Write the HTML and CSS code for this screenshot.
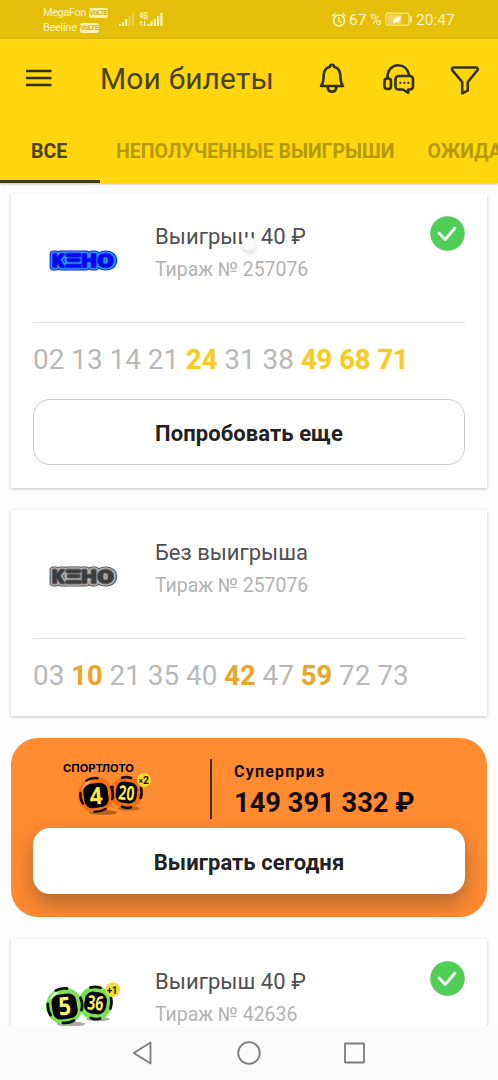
FILE: index.html
```
<!DOCTYPE html>
<html lang="ru">
<head>
<meta charset="utf-8">
<title>Мои билеты</title>
<link rel="stylesheet" href="styles.css">
</head>
<body>
<div class="screen">
  <div class="status">
    <div class="carriers">
      <div class="carrier"><span class="megafon">MegaFon</span><b class="volte">VoLTE</b></div>
      <div class="carrier"><span class="beeline">Beeline</span><b class="volte">VoLTE</b></div>
    </div>
    <svg class="signals" width="46" height="18" viewBox="118 11 46 18" fill="#fff5bd">
      <rect x="119" y="24" width="2" height="2"/><rect x="122" y="22" width="2" height="4"/><rect x="125" y="19" width="2.2" height="7"/>
      <rect x="128.500" y="16" width="2" height="10" opacity=".35"/><rect x="132" y="13" width="2" height="13" opacity=".35"/>
      <text class="net" x="139.500" y="18.500" textLength="8" lengthAdjust="spacingAndGlyphs">4G</text>
      <path d="M141 21v5M139.500 22.500L141 21l1.500 1.500M144.500 21v5M143 24.500l1.500 1.500 1.500-1.500" fill="none" stroke="#fff5bd"/>
      <rect x="147.500" y="24" width="2" height="2"/><rect x="150.500" y="21.500" width="2" height="4.500"/><rect x="153.700" y="19" width="2.200" height="7"/><rect x="157" y="16" width="2.200" height="10"/><rect x="160.300" y="13" width="2.200" height="13"/>
    </svg>
    <svg class="alarm" width="16" height="16" viewBox="0 0 16 16" fill="none" stroke="#fff5bd" stroke-width="1.500"><circle cx="8" cy="8.500" r="5.500"/><path d="M8 5v4l2.500 1.500M1.300 4.200l3-2.700M14.700 4.200l-3-2.700"/></svg>
    <span class="percent">67 %</span>
    <svg class="battery" width="28" height="15" viewBox="0 0 28 15"><rect x="1" y="1.200" width="23" height="12" rx="1.500" fill="none" stroke="#fbe88d" stroke-width="1.200"/><rect x="2.500" y="2.700" width="14" height="9" fill="#f0d362"/><rect x="25" y="4" width="1.800" height="6.500" fill="#fff1ac"/><path d="M8.500 11C8 7.500 11 5 15.500 4c.5 4-1.500 6.500-5 6.200l-1 1z" fill="#fffbe3"/></svg>
    <span class="clock">20:47</span>
  </div>

  <header class="header">
    <div class="appbar">
      <svg class="menu" width="26" height="18" viewBox="0 0 26 18" stroke="#353007" stroke-width="2.700"><path d="M0 2h25.500M0 9h25.500M0 16h25.500"/></svg>
      <h1 class="title">Мои билеты</h1>
      <svg class="bell" width="26" height="32" viewBox="319 62 26 32" fill="none" stroke="#353007" stroke-width="2.600" stroke-linejoin="round" stroke-linecap="round"><path d="M330 65.800a2 2 0 0 1 4 0c4.300 1.200 6.200 4.500 6.300 8.800.1 5 .3 7.500 2.700 10.400h-22c2.400-2.900 2.600-5.400 2.700-10.400.1-4.300 2-7.600 6.300-8.800z"/><path d="M327.600 86c.4 3.200 2.200 4.700 4.400 4.700s4-1.500 4.400-4.700"/></svg>
      <svg class="support" width="34" height="32" viewBox="382 62 34 32" fill="none" stroke="#353007" stroke-width="2.600" stroke-linejoin="round" stroke-linecap="round"><rect x="384.500" y="77.500" width="6.500" height="10.500" rx="2.700"/><path d="M387.500 76.800c-.2-7.700 4.500-12.600 10.500-12.600 5.700 0 10.200 4 11 9.500"/><path d="M398.500 75h11.500a3 3 0 0 1 3 3v7.500a3 3 0 0 1-3 3h-1.800v3.300l-5.200-3.300h-4.500a3 3 0 0 1-3-3V78a3 3 0 0 1 3-3z"/><path stroke-width="2.200" d="M400.300 81.800h.1M404.300 81.800h.1M408.300 81.800h.1"/></svg>
      <svg class="filter" width="30" height="32" viewBox="450 62 30 32" fill="none" stroke="#353007" stroke-width="2.500" stroke-linejoin="round"><path d="M453.500 66.500h22.500c1.600 0 2.300 1.700 1.300 2.900L467.800 81v8.500l-5.600 3V81l-9.800-11.600c-1-1.300-.3-2.900 1.100-2.900z"/></svg>
    </div>
    <nav class="tabs">
      <div class="tab tab-active">ВСЕ</div>
      <div class="tab tab-unclaimed">НЕПОЛУЧЕННЫЕ ВЫИГРЫШИ</div>
      <div class="tab tab-pending">ОЖИДА</div>
    </nav>
  </header>

  <main class="list">
    <section class="card card-win">
      <div class="summary">
        <svg class="logo" width="122" height="40" viewBox="33 240 122 40">
          <defs><g id="keno-word"><text x="52" y="266.500" textLength="12" lengthAdjust="spacingAndGlyphs">K</text><text x="65.500" y="266.500" textLength="16" lengthAdjust="spacingAndGlyphs">Ξ</text><text x="81.500" y="266.500" textLength="15" lengthAdjust="spacingAndGlyphs">H</text><text x="97.500" y="266.500" textLength="16" lengthAdjust="spacingAndGlyphs">O</text></g></defs>
          <g class="keno keno-blue"><use href="#keno-word" class="edge"/><use href="#keno-word" class="ring"/><use href="#keno-word" class="inner"/><use href="#keno-word" class="face"/></g>
        </svg>
        <div class="info"><div class="result win40">Выигрыш 40 ₽</div><div class="draw">Тираж № 257076</div></div>
        <svg class="check" width="35" height="35" viewBox="0 0 35 35"><circle cx="17.500" cy="17.500" r="17.300" fill="#50ce58"/><path d="M9 17l6.200 6.500L25 12" fill="none" stroke="#f1fff1" stroke-width="2.900" stroke-linecap="round" stroke-linejoin="round"/></svg>
      </div>
      <div class="numbers yellow">02 13 14 21 <b>24</b> 31 38 <b>49</b> <b>68</b> <b>71</b></div>
      <button class="retry">Попробовать еще</button>
      <span class="touch"></span>
    </section>

    <section class="card card-lose">
      <div class="summary">
        <svg class="logo" width="122" height="40" viewBox="33 240 122 40"><g class="keno keno-gray"><use href="#keno-word" class="edge"/><use href="#keno-word" class="ring"/><use href="#keno-word" class="inner"/><use href="#keno-word" class="face"/></g></svg>
        <div class="info"><div class="result">Без выигрыша</div><div class="draw">Тираж № 257076</div></div>
      </div>
      <div class="numbers amber">03 <b>10</b> 21 35 40 <b>42</b> 47 <b>59</b> 72 73</div>
    </section>

    <section class="promo">
      <div class="promo-top">
        <svg class="sportloto" width="100" height="60" viewBox="60 760 100 60">
          <text x="63" y="773" class="brand" textLength="71" lengthAdjust="spacingAndGlyphs">СПОРТЛОТО</text>
          <ellipse cx="103" cy="813.500" rx="14" ry="2.500" fill="#b8621f"/><ellipse cx="129" cy="809.500" rx="11" ry="2" fill="#b8621f"/>
          <circle cx="126.500" cy="793.500" r="16.300" fill="#f56f16"/><g fill="none" stroke="#170d05" stroke-width="2.600" stroke-linecap="round"><path d="M122 778.800q5-1.500 9 .2M141 789q1.500 5-.5 10M131 808.200q-5 1.500-9-.5M112.500 788q-1.500 5 .5 10"/></g>
          <rect x="116" y="783" width="21" height="21" rx="7" transform="rotate(8 126.500 793.500)"/>
          <circle cx="96" cy="796" r="18" fill="#f56f16"/><path d="M81.500 791q3-9 10-11-3 6-10 11" fill="#ffb06f"/><g fill="none" stroke="#170d05" stroke-width="2.600" stroke-linecap="round"><path d="M86.500 781.500q5-3.200 11-2.300M111 788q2.800 6 1.300 12M105.500 810q-5 3-11 2.700M80.500 794q-.5 6 2.500 10.500"/></g>
          <rect x="83.800" y="784.300" width="24.400" height="24.400" rx="8" transform="rotate(-8 96 796.500)"/>
          <text class="ball" x="89.500" y="805.500" font-size="24" transform="rotate(-5 96 797)" textLength="13" lengthAdjust="spacingAndGlyphs">4</text>
          <text class="ball" x="118.500" y="801" font-size="20" transform="rotate(6 126 794)" textLength="16" lengthAdjust="spacingAndGlyphs">20</text>
          <circle cx="144" cy="781" r="7" fill="#f5d936"/><text class="mult" x="138.500" y="785" textLength="10.500" lengthAdjust="spacingAndGlyphs"><tspan font-size="9">×</tspan>2</text>
        </svg>
        <div class="rule"></div>
        <div class="prize"><div class="prize-label">Суперприз</div><div class="prize-sum">149 391 332 ₽</div></div>
      </div>
      <button class="play">Выиграть сегодня</button>
    </section>

    <section class="card card-last">
      <div class="summary">
        <svg class="logo balls" width="122" height="60" viewBox="33 978 122 60">
          <ellipse cx="71" cy="1025" rx="14" ry="2.500" fill="#aaa"/><ellipse cx="98" cy="1020" rx="12" ry="2.200" fill="#aaa"/>
          <circle cx="95.500" cy="1004" r="17" fill="#7ede58"/><g fill="none" stroke="#0b1606" stroke-width="2.800" stroke-linecap="round"><path d="M90.500 988.500q5-1.500 10 .3M111 999q1.200 5-.6 10.500M100 1019.500q-5 1.500-9-.5M80 999q-1 6 1 11"/></g>
          <rect x="84.500" y="993" width="22" height="22" rx="8" transform="rotate(8 95.500 1004)"/>
          <circle cx="64.500" cy="1007" r="18.500" fill="#7ede58"/><path d="M49 1001q4-9 11-10-4 6-11 10" fill="#dfffc9"/><g fill="none" stroke="#0b1606" stroke-width="2.800" stroke-linecap="round"><path d="M56 991.500q5-2.500 11-2M80.500 999q2.800 6 1 12M74 1021.500q-5 3-11 2.300M47.800 1005q-.4 6 2.700 11"/></g>
          <rect x="52" y="995" width="25" height="25" rx="8" transform="rotate(-8 64.500 1007)"/>
          <text class="ball ball-cream" x="58.500" y="1016" font-size="25" transform="rotate(-5 65 1007)" textLength="12.500" lengthAdjust="spacingAndGlyphs">5</text>
          <text class="ball ball-cream" x="87.500" y="1011" font-size="20" transform="rotate(6 95 1004)" textLength="16" lengthAdjust="spacingAndGlyphs">36</text>
          <circle cx="113" cy="990.500" r="7.300" fill="#f1dc3e"/><text class="mult" x="107" y="994.500" textLength="10.500" lengthAdjust="spacingAndGlyphs">+1</text>
        </svg>
        <div class="info"><div class="result win40">Выигрыш 40 ₽</div><div class="draw draw-short">Тираж № 42636</div></div>
        <svg class="check" width="35" height="35" viewBox="0 0 35 35"><circle cx="17.500" cy="17.500" r="17.300" fill="#50ce58"/><path d="M9 17l6.200 6.500L25 12" fill="none" stroke="#f1fff1" stroke-width="2.900" stroke-linecap="round" stroke-linejoin="round"/></svg>
      </div>
    </section>
  </main>

  <footer class="navbar">
    <svg width="24" height="26" viewBox="0 0 24 26"><path d="M19.500 2.500v21L2.800 13z"/></svg>
    <svg width="26" height="26" viewBox="0 0 26 26"><circle cx="13" cy="13" r="10.800"/></svg>
    <svg width="24" height="26" viewBox="0 0 24 26"><rect x="2" y="3.500" width="19" height="19" rx=".5"/></svg>
  </footer>
</div>
</body>
</html>
```
FILE: styles.css
```
* { box-sizing: border-box; }
body { margin: 0; font-family: Roboto, "Liberation Sans", sans-serif; background: #fdfdfd; }
.screen { width: 498px; height: 1080px; display: flex; flex-direction: column; overflow: hidden; }

.status { height: 39px; flex: none; background: #e5be0c; color: #fff5bd; display: flex; align-items: center; padding-left: 43px; }
.carriers { width: 75px; display: flex; flex-direction: column; gap: 1px; padding-top: 1px; }
.carrier { display: flex; align-items: center; gap: 3px; font-size: 11px; line-height: 14px; letter-spacing: -.45px; }
.beeline { letter-spacing: -.3px; }
.volte { background: #fff1ac; color: #d8b216; border-radius: 2px; font-size: 8px; line-height: 10px; width: 19px; text-align: center; letter-spacing: -.8px; }
.signals { flex: none; }
.net { font-size: 8.5px; font-weight: 700; }
.alarm { margin-left: 167px; flex: none; }
.percent { margin-left: 2px; width: 36px; font-size: 15.5px; white-space: nowrap; }
.battery { flex: none; }
.clock { margin-left: 3px; font-size: 15.5px; }

.header { height: 144px; flex: none; background: #ffd60f; color: #4b420b; box-shadow: 0 1px 3px rgba(0,0,0,.28); z-index: 1; }
.appbar { height: 79px; display: flex; align-items: center; padding-left: 26px; }
.menu { margin-bottom: 2px; }
.title { margin: 1px 0 0 48px; width: 219px; font-weight: 400; font-size: 30px; line-height: 36px; letter-spacing: .15px; white-space: nowrap; }
.support { margin-left: 37px; }
.filter { margin-left: 34px; }
.tabs { display: flex; height: 65px; overflow: hidden; white-space: nowrap; font-size: 19.500px; font-weight: 700; line-height: 67px; color: #b69808; }
.tab { flex: none; height: 65px; }
.tab-active { width: 100px; padding-left: 31px; color: #4b420b; border-bottom: 3px solid #3f370a; }
.tab-unclaimed { width: 311.500px; padding-left: 16px; }
.tab-pending { padding-left: 16px; }

.list { height: 843px; flex: none; padding: 11px 11px 0; display: flex; flex-direction: column; gap: 22px; overflow: hidden; }
.card { position: relative; flex: none; background: #fff; padding: 0 22px; box-shadow: 0 1px 3px rgba(0,0,0,.23); }
.card-win { height: 294px; }
.card-lose { height: 205.500px; }
.card-last { height: 206px; }
.summary { height: 129px; border-bottom: 1px solid #dedede; display: flex; align-items: flex-start; }
.logo { margin-top: 46px; flex: none; }
.balls { margin-top: 38px; }
.info { width: 275px; padding-top: 29px; white-space: nowrap; }
.result { font-size: 22px; line-height: 28px; color: #505050; }
.win40 { letter-spacing: .05px; }
.draw { font-size: 19.430px; line-height: 24px; margin-top: 7px; color: #b3b3b3; }
.check { margin-top: 22px; flex: none; }
.numbers { margin-top: 19px; height: 36px; line-height: 36px; font-size: 27.900px; color: #b9b9b9; white-space: nowrap; }
.numbers b { font-weight: 700; font-size: 27.300px; }
.yellow b { color: #f2cb32; text-shadow: 0 0 3px #ffeb8a; }
.amber b { color: #e3a734; text-shadow: 0 0 3px #ffe8a4; }
.retry, .play { display: block; width: 100%; height: 66px; padding: 2px 0 0; font: 700 22px Roboto, sans-serif; color: #222; background: #fff; border: 0; border-radius: 17px; letter-spacing: .07px; }
.retry { margin-top: 21px; border: 1.500px solid #ccc; }
.touch { position: absolute; left: 231px; top: 43px; width: 14px; height: 14px; border-radius: 50%; background: #fafafa; box-shadow: 0 2px 4px rgba(0,0,0,.16); }

.keno { font-size: 18px; font-weight: 700; stroke-linejoin: round; }
.keno .edge { stroke-width: 7px; }
.keno .ring { stroke-width: 4.800px; }
.keno .inner { stroke-width: 2.800px; }
.keno .face { stroke-width: 1.200px; }
.keno-blue .edge { stroke: #0831cf; }
.keno-blue .ring { stroke: #38a0f8; fill: #38a0f8; }
.keno-blue .inner { stroke: #1650ee; fill: #1650ee; }
.keno-blue .face { fill: #0505ee; stroke: #0505ee; }
.keno-gray .edge { stroke: #5c5c5c; }
.keno-gray .ring { stroke: #bcbcbc; fill: #bcbcbc; }
.keno-gray .inner { stroke: #777; fill: #777; }
.keno-gray .face { fill: #3c3c3c; stroke: #3c3c3c; }

.promo { height: 179.500px; flex: none; border-radius: 27px; background: #ff8b33; padding: 21.500px 22px 0; overflow: hidden; color: #140b05; }
.promo-top { display: flex; height: 69px; }
.sportloto { margin-left: 27px; flex: none; }
.rule { width: 2px; height: 60px; margin-left: 50px; background: #4b270e; }
.prize { padding: 3px 0 0 22px; white-space: nowrap; }
.prize-label { font-size: 16px; line-height: 20px; font-weight: 700; letter-spacing: 1.200px; }
.prize-sum { font-size: 27.300px; line-height: 32px; margin-top: 5px; font-weight: 700; }
.play { border-radius: 17px; box-shadow: 0 10px 20px rgba(60,50,40,.4); }
.brand { font: 700 10.500px Inter, sans-serif; }
.ball { font-family: "Open Sans", sans-serif; font-weight: 700; fill: #ffe943; }
.ball-cream { fill: #fff06e; }
.mult { font: 700 11px Roboto, sans-serif; fill: #171304; }

.navbar { height: 54px; flex: none; background: #fbfbfb; display: flex; align-items: center; justify-content: center; gap: 81px; z-index: 1; }
.navbar svg { fill: none; stroke: #7c7c7c; stroke-width: 1.800px; stroke-linejoin: round; }
```
